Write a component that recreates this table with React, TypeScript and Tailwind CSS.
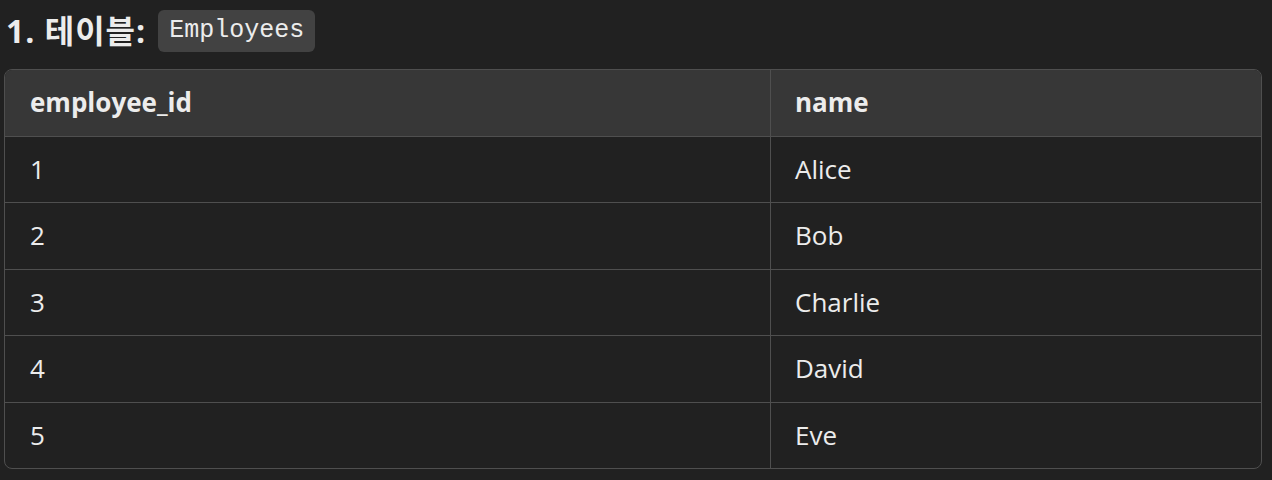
const rows = [
  { id: "1", name: "Alice" },
  { id: "2", name: "Bob" },
  { id: "3", name: "Charlie" },
  { id: "4", name: "David" },
  { id: "5", name: "Eve" },
]

export default function App() {
  return (
    <div className="w-[1272px] h-[480px] bg-[#212121] text-[#ececec] px-[4px] pt-[10px] font-['Open_Sans','Noto_Sans_CJK_KR',sans-serif]">
      <h3 className="flex items-center h-[42px] text-[32px] font-bold pl-[2px] gap-[12px]">
        <span className="tracking-[1px]">1. 테이블:</span>
        <code className="h-[42px] flex items-center px-[11px] rounded-[6px] bg-[#424242] text-[25px] font-normal font-['Liberation_Mono',monospace]">
          Employees
        </code>
      </h3>

      <div className="mt-[17px] w-[1258px] border border-[#4f4f4f] rounded-[8px] overflow-hidden text-[26px]">
        <div className="grid grid-cols-[766px_1fr] bg-[#373737] font-bold h-[65.5px]">
          <div className="flex items-center pl-[25px] border-r border-[#4f4f4f]">employee_id</div>
          <div className="flex items-center pl-[24px]">name</div>
        </div>
        {rows.map((r) => (
          <div key={r.id} className="grid grid-cols-[766px_1fr] border-t border-[#4f4f4f] h-[66.5px]">
            <div className="flex items-center pl-[25px] border-r border-[#4f4f4f]">{r.id}</div>
            <div className="flex items-center pl-[24px]">{r.name}</div>
          </div>
        ))}
      </div>
    </div>
  )
}
